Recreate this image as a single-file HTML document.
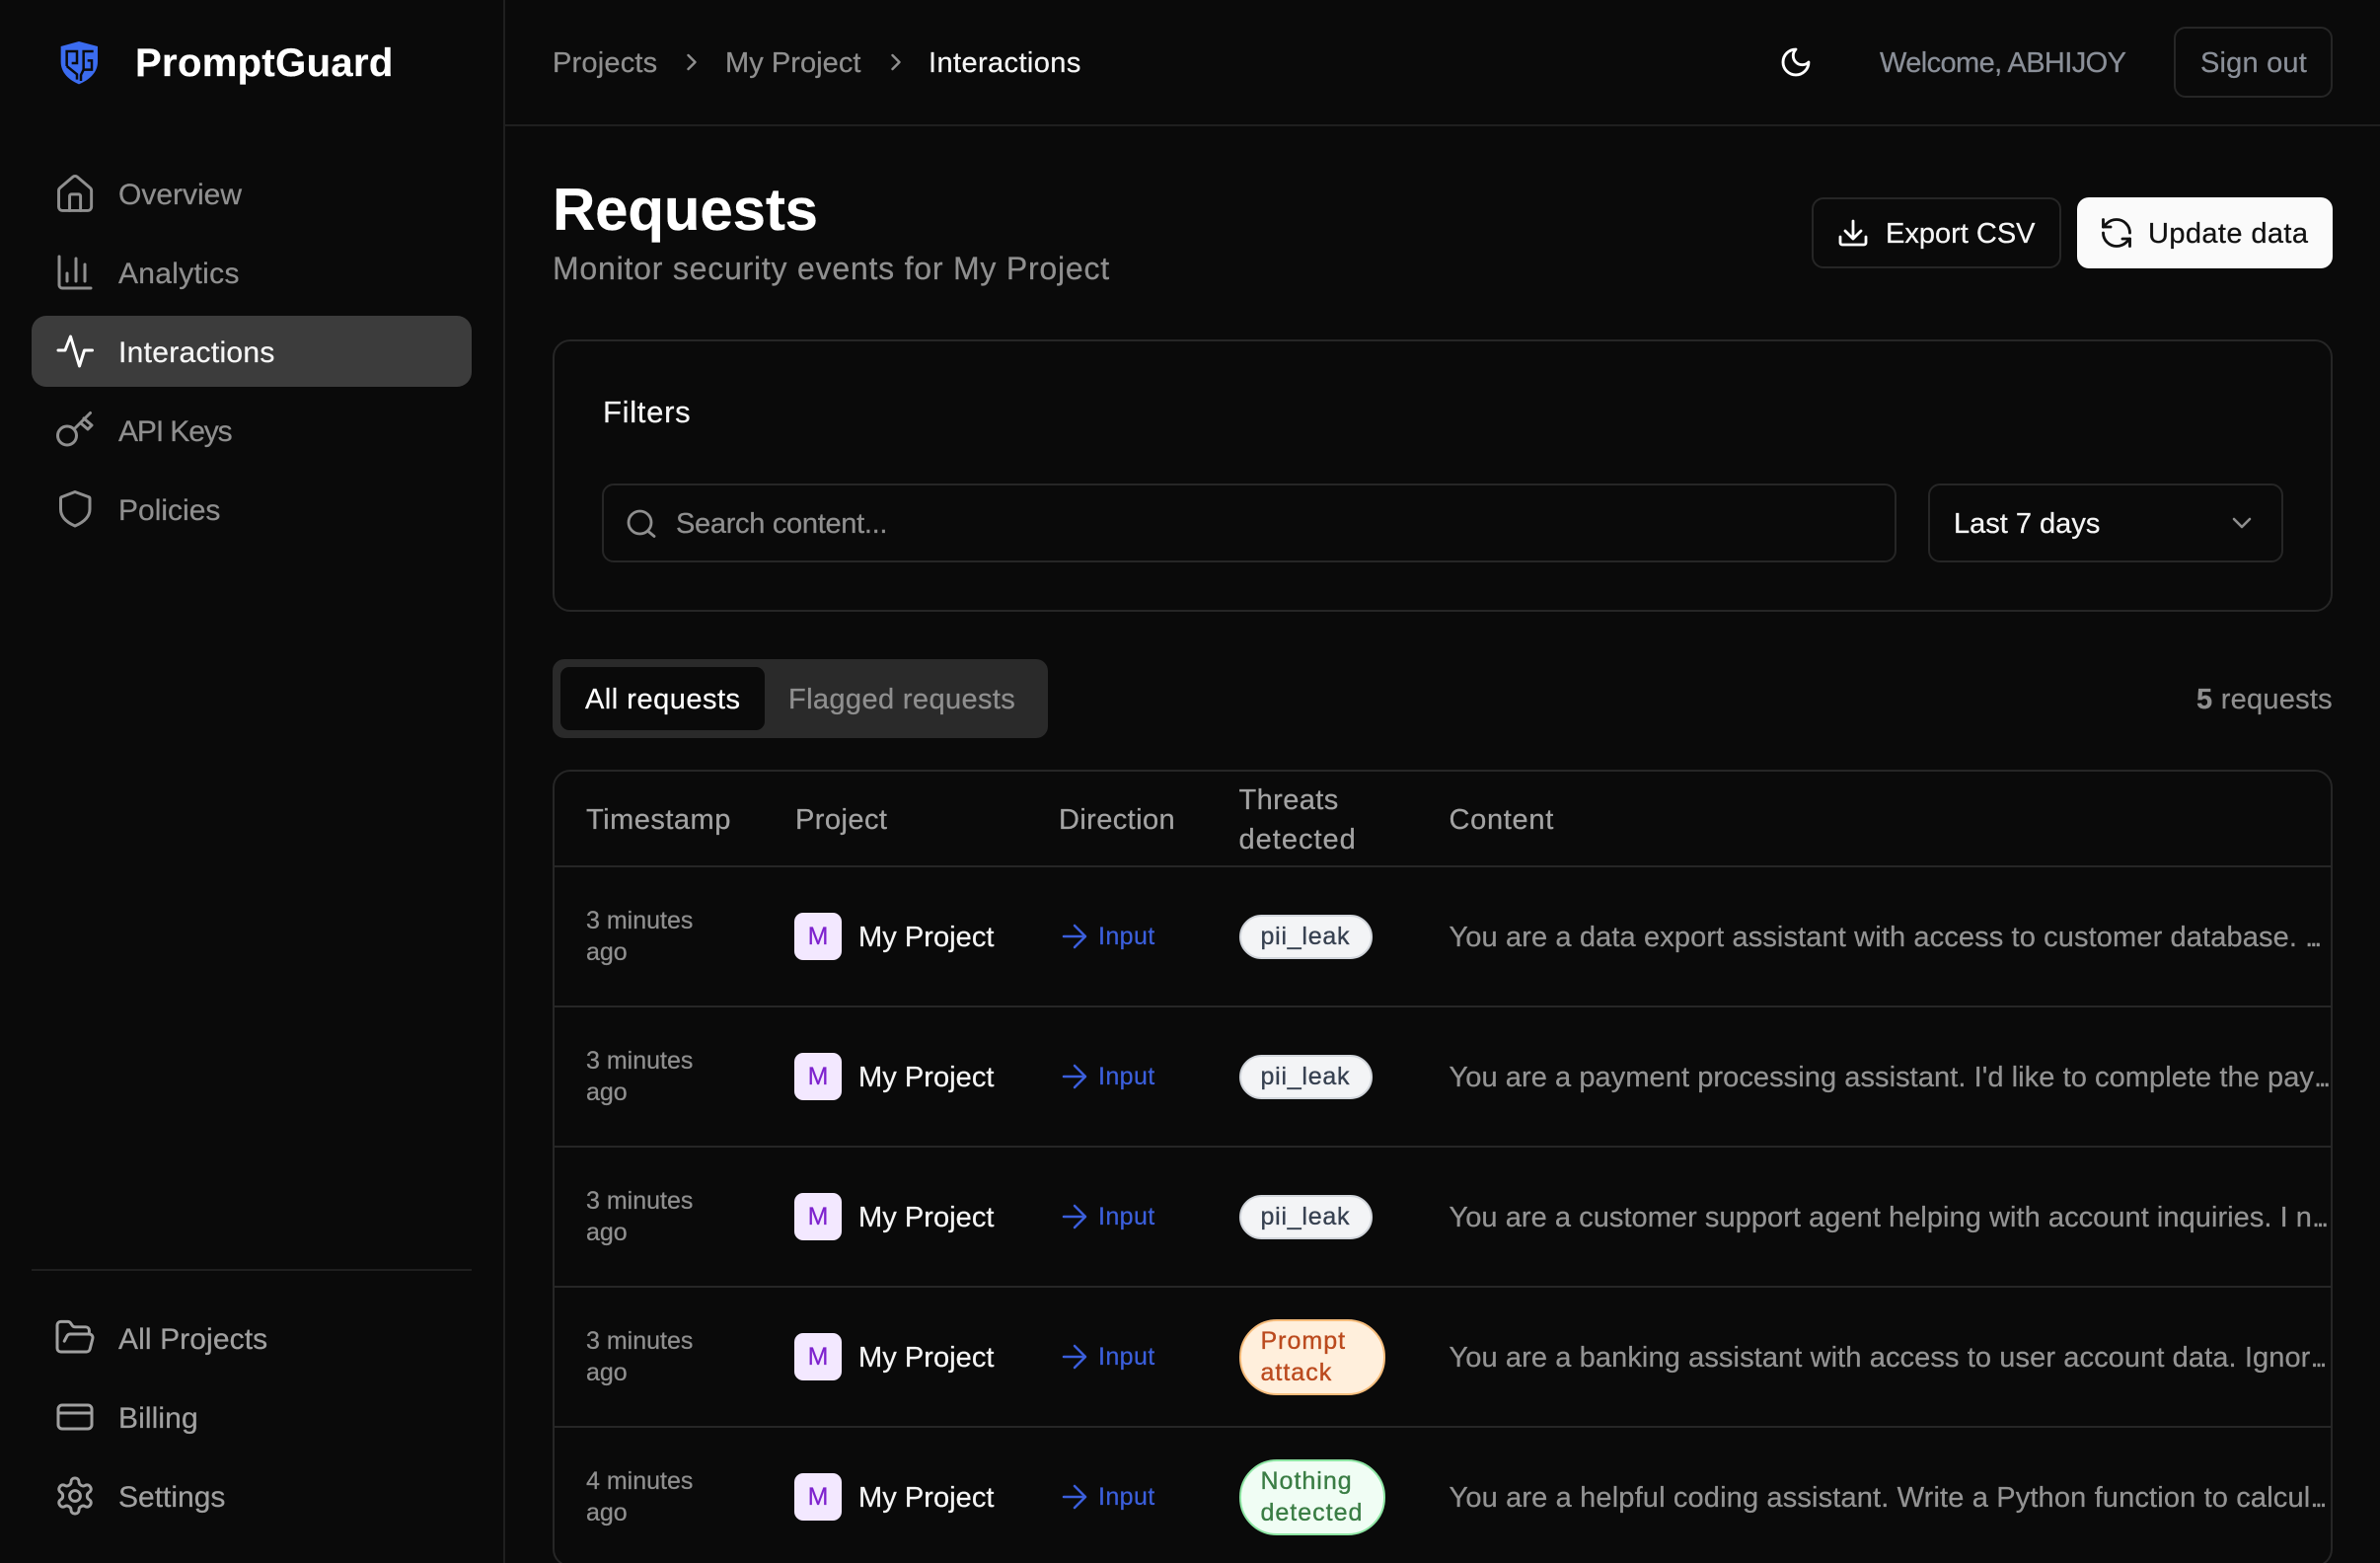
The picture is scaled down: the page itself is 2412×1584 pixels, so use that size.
<!DOCTYPE html>
<html lang="en">
<head>
<meta charset="utf-8">
<title>PromptGuard - Requests</title>
<style>
html,body{margin:0;padding:0;width:2412px;height:1584px;overflow:hidden;background:#0a0a0a}
body{position:relative;font-family:"Liberation Sans",Arial,sans-serif;font-size:29px;color:#8f8f8f;-webkit-text-stroke:.25px currentColor}
.t{position:absolute;white-space:nowrap;line-height:40px;height:40px;margin-top:1px}
.b{position:absolute;box-sizing:border-box;border:2px solid #262626}
.f{position:absolute}
.w{color:#f5f5f5}
.n{font-size:30px;margin-top:1.5px}
.h{color:#a3a3a3;margin-top:0}
.c{color:#939393;letter-spacing:.1px}
.c span{letter-spacing:-3.5px}
.ts{font-size:25px;line-height:32px;height:64px;color:#8f8f8f;position:absolute;white-space:normal;width:130px}
.av{position:absolute;left:805px;width:48px;height:48px;border-radius:9px;background:#f3e8ff;color:#7e22ce;font-size:25px;line-height:48px;text-align:center}
.inp{color:#3b5fdc;font-size:25px;letter-spacing:.4px;margin-top:0}
.pill{position:absolute;left:1255.500px;box-sizing:border-box;border:2px solid;font-size:25px;-webkit-text-stroke:.35px currentColor}
.pl{width:135px;height:45px;border-radius:23px;background:#f3f4f6;border-color:#d1d5db;color:#374151;line-height:41px;padding-left:20px;letter-spacing:.75px}
.p2{width:148px;height:77px;border-radius:38px;line-height:32px;padding:4px 0 0 20px;letter-spacing:1px}
svg.o{position:absolute;left:0;top:0}
</style>
</head>
<body>
<!-- frame lines -->
<div class="f" style="left:510px;top:0;width:2px;height:1584px;background:#1f1f1f"></div>
<div class="f" style="left:512px;top:126px;width:1900px;height:2px;background:#1f1f1f"></div>

<!-- sidebar -->
<div class="t" style="left:137px;top:43px;font-size:40px;font-weight:700;letter-spacing:.35px;color:#fff">PromptGuard</div>
<div class="f" style="left:32px;top:320px;width:446px;height:72px;border-radius:15px;background:#3c3c3c"></div>
<div class="t n" style="left:120px;top:176px">Overview</div>
<div class="t n" style="left:120px;top:256px;letter-spacing:.3px">Analytics</div>
<div class="t n w" style="left:120px;top:336px;letter-spacing:.3px">Interactions</div>
<div class="t n" style="left:120px;top:416px;letter-spacing:-1.100px">API Keys</div>
<div class="t n" style="left:120px;top:496px">Policies</div>
<div class="f" style="left:32px;top:1286px;width:446px;height:2px;background:#1f1f1f"></div>
<div class="t n" style="left:120px;top:1336px;letter-spacing:.1px;color:#a0a0a0">All Projects</div>
<div class="t n" style="left:120px;top:1416px;letter-spacing:.1px;color:#a0a0a0">Billing</div>
<div class="t n" style="left:120px;top:1496px;color:#a0a0a0">Settings</div>

<!-- top bar -->
<div class="t" style="left:560px;top:43px;letter-spacing:.2px">Projects</div>
<div class="t" style="left:735px;top:43px;letter-spacing:.05px">My Project</div>
<div class="t w" style="left:941px;top:43px;letter-spacing:.4px">Interactions</div>
<div class="t" style="left:1905px;top:43px;letter-spacing:-.6px;color:#8a8f98">Welcome, ABHIJOY</div>
<div class="b" style="left:2203px;top:27px;width:161px;height:72px;border-radius:12px"></div>
<div class="t" style="left:2230px;top:43px;letter-spacing:.2px;color:#8a8f98">Sign out</div>

<!-- title -->
<div class="t" style="left:560px;top:182px;font-size:60px;font-weight:700;letter-spacing:-.15px;color:#fff;line-height:60px;height:60px">Requests</div>
<div class="t" style="left:560px;top:252px;font-size:32px;letter-spacing:.78px;margin-top:0">Monitor security events for My Project</div>
<div class="b" style="left:1836px;top:200px;width:253px;height:72px;border-radius:12px"></div>
<div class="t w" style="left:1911px;top:216px">Export CSV</div>
<div class="f" style="left:2105px;top:200px;width:259px;height:72px;border-radius:12px;background:#fafafa"></div>
<div class="t" style="left:2177px;top:216px;letter-spacing:.4px;color:#111">Update data</div>

<!-- filters -->
<div class="b" style="left:560px;top:344px;width:1804px;height:276px;border-radius:18px"></div>
<div class="t w" style="left:611px;top:398px;font-size:31px;letter-spacing:.7px;margin-top:0">Filters</div>
<div class="b" style="left:610px;top:490px;width:1312px;height:80px;border-radius:12px"></div>
<div class="t" style="left:685px;top:510px;letter-spacing:-.3px">Search content...</div>
<div class="b" style="left:1954px;top:490px;width:360px;height:80px;border-radius:12px"></div>
<div class="t w" style="left:1980px;top:510px">Last 7 days</div>

<!-- tabs -->
<div class="f" style="left:560px;top:668px;width:502px;height:80px;border-radius:12px;background:#2a2a2a"></div>
<div class="f" style="left:568px;top:676px;width:207px;height:64px;border-radius:9px;background:#0a0a0a"></div>
<div class="t" style="left:593px;top:688px;letter-spacing:.5px;color:#fff">All requests</div>
<div class="t" style="left:799px;top:688px;letter-spacing:.38px">Flagged requests</div>
<div class="t" style="left:2226px;top:688px;letter-spacing:.25px"><b>5</b> requests</div>

<!-- table -->
<div class="b" style="left:560px;top:780px;width:1804px;height:808px;border-radius:18px"></div>
<div class="t h" style="left:594px;top:811px;letter-spacing:.5px">Timestamp</div>
<div class="t h" style="left:806px;top:811px;letter-spacing:.45px">Project</div>
<div class="t h" style="left:1073px;top:811px;letter-spacing:.4px">Direction</div>
<div class="t h" style="left:1255.500px;top:791px;letter-spacing:.4px">Threats</div>
<div class="t h" style="left:1255.500px;top:831px;letter-spacing:1px">detected</div>
<div class="t h" style="left:1468.500px;top:811px;letter-spacing:.7px">Content</div>
<div class="f" style="left:562px;top:877px;width:1800px;height:2px;background:#262626"></div>
<div class="f" style="left:562px;top:1019px;width:1800px;height:2px;background:#262626"></div>
<div class="f" style="left:562px;top:1161px;width:1800px;height:2px;background:#262626"></div>
<div class="f" style="left:562px;top:1303px;width:1800px;height:2px;background:#262626"></div>
<div class="f" style="left:562px;top:1445px;width:1800px;height:2px;background:#262626"></div>

<!-- row 1 -->
<div class="ts" style="left:594px;top:917px">3 minutes ago</div>
<div class="av" style="top:925px">M</div>
<div class="t w" style="left:870px;top:929px;letter-spacing:.05px">My Project</div>
<div class="t inp" style="left:1113px;top:929px">Input</div>
<div class="pill pl" style="top:927px">pii_leak</div>
<div class="t c" style="left:1468.500px;top:929px;letter-spacing:.12px">You are a data export assistant with access to customer database. <span>...</span></div>
<!-- row 2 -->
<div class="ts" style="left:594px;top:1059px">3 minutes ago</div>
<div class="av" style="top:1067px">M</div>
<div class="t w" style="left:870px;top:1071px;letter-spacing:.05px">My Project</div>
<div class="t inp" style="left:1113px;top:1071px">Input</div>
<div class="pill pl" style="top:1069px">pii_leak</div>
<div class="t c" style="left:1468.500px;top:1071px;letter-spacing:.07px">You are a payment processing assistant. I'd like to complete the pay<span>...</span></div>
<!-- row 3 -->
<div class="ts" style="left:594px;top:1201px">3 minutes ago</div>
<div class="av" style="top:1209px">M</div>
<div class="t w" style="left:870px;top:1213px;letter-spacing:.05px">My Project</div>
<div class="t inp" style="left:1113px;top:1213px">Input</div>
<div class="pill pl" style="top:1211px">pii_leak</div>
<div class="t c" style="left:1468.500px;top:1213px;letter-spacing:.05px">You are a customer support agent helping with account inquiries. I n<span>...</span></div>
<!-- row 4 -->
<div class="ts" style="left:594px;top:1343px">3 minutes ago</div>
<div class="av" style="top:1351px">M</div>
<div class="t w" style="left:870px;top:1355px;letter-spacing:.05px">My Project</div>
<div class="t inp" style="left:1113px;top:1355px">Input</div>
<div class="pill p2" style="top:1337px;background:#ffefdc;border-color:#f7bd7c;color:#bb4a1e">Prompt attack</div>
<div class="t c" style="left:1468.500px;top:1355px;letter-spacing:.1px">You are a banking assistant with access to user account data. Ignor<span>...</span></div>
<!-- row 5 -->
<div class="ts" style="left:594px;top:1485px">4 minutes ago</div>
<div class="av" style="top:1493px">M</div>
<div class="t w" style="left:870px;top:1497px;letter-spacing:.05px">My Project</div>
<div class="t inp" style="left:1113px;top:1497px">Input</div>
<div class="pill p2" style="top:1479px;background:#f0fdf4;border-color:#8ee6a4;color:#3a7d44">Nothing detected</div>
<div class="t c" style="left:1468.500px;top:1497px;letter-spacing:.15px">You are a helpful coding assistant. Write a Python function to calcul<span>...</span></div>

<!-- icons -->
<svg class="o" width="2412" height="1584" viewBox="0 0 2412 1584" fill="none" stroke-linecap="round" stroke-linejoin="round">
  <!-- logo -->
  <g transform="translate(50 32) scale(.3333)">
    <path d="M90 30 L147 45 V92 C147 125 120 148 90 160 C60 148 35 125 35 92 V45 Z" fill="#3b6cf0"/>
    <g stroke="#0a0a0a" stroke-width="7.500" stroke-linecap="butt" stroke-linejoin="miter">
      <path d="M53 105 V60 H84 V96 H68"/>
      <path d="M53 105 L84 130 V146"/>
      <path d="M134 60 H104 V116 H129 V88 H116"/>
      <path d="M104 116 L96 132 V150"/>
    </g>
  </g>
  <!-- sidebar icons -->
  <g stroke="#8f8f8f" stroke-width="3">
    <g transform="translate(54 174.800) scale(1.84)" stroke-width="1.6">
      <path d="M15 21v-8a1 1 0 0 0-1-1h-4a1 1 0 0 0-1 1v8"/>
      <path d="M3 10a2 2 0 0 1 .709-1.528l7-5.999a2 2 0 0 1 2.582 0l7 5.999A2 2 0 0 1 21 10v9a2 2 0 0 1-2 2H5a2 2 0 0 1-2-2z"/>
    </g>
    <path d="M60 260V289a3 3 0 0 0 3 3H92"/>
    <path d="M68 277V285M77 262V285M86 268V285"/>
    <circle cx="68" cy="441.500" r="9.500"/>
    <path d="M76.500 433.500L91.500 418.500M85 424l8 7-4 4-7-6"/>
    <path d="M76 498.500L89.500 503.500a2 2 0 0 1 1.500 2V516C91 525 83 530 76 533C69 530 61.500 525 61.500 516V505.500a2 2 0 0 1 1.500-2Z"/>
  </g>
  <path d="M59 355h7l5.500-14 9 30 5-16h8" stroke="#fff" stroke-width="3"/>
  <g stroke="#a0a0a0" stroke-width="3">
    <g transform="translate(54.400 1334) scale(1.8)" stroke-width="1.65">
      <path d="m6 14 1.500-2.900A2 2 0 0 1 9.240 10H20a2 2 0 0 1 1.940 2.500l-1.540 6a2 2 0 0 1-1.950 1.500H4a2 2 0 0 1-2-2V5a2 2 0 0 1 2-2h3.900a2 2 0 0 1 1.690.9l.81 1.200a2 2 0 0 0 1.670.9H18a2 2 0 0 1 2 2v2"/>
    </g>
    <rect x="59" y="1424" width="34" height="24" rx="4"/>
    <path d="M59 1432H93"/>
    <g transform="translate(54.400 1494.400) scale(1.8)" stroke-width="1.65">
      <path d="M12.220 2h-.44a2 2 0 0 0-2 2v.18a2 2 0 0 1-1 1.730l-.43.25a2 2 0 0 1-2 0l-.15-.08a2 2 0 0 0-2.730.73l-.22.38a2 2 0 0 0 .73 2.730l.15.1a2 2 0 0 1 1 1.720v.51a2 2 0 0 1-1 1.740l-.15.09a2 2 0 0 0-.73 2.730l.22.38a2 2 0 0 0 2.730.73l.15-.08a2 2 0 0 1 2 0l.43.25a2 2 0 0 1 1 1.730V20a2 2 0 0 0 2 2h.44a2 2 0 0 0 2-2v-.18a2 2 0 0 1 1-1.730l.43-.25a2 2 0 0 1 2 0l.15.08a2 2 0 0 0 2.730-.73l.22-.39a2 2 0 0 0-.73-2.730l-.15-.08a2 2 0 0 1-1-1.740v-.5a2 2 0 0 1 1-1.740l.15-.09a2 2 0 0 0 .73-2.730l-.22-.38a2 2 0 0 0-2.730-.73l-.15.08a2 2 0 0 1-2 0l-.43-.25a2 2 0 0 1-1-1.730V4a2 2 0 0 0-2-2z"/>
      <circle cx="12" cy="12" r="3"/>
    </g>
  </g>
  <!-- breadcrumb chevrons -->
  <path d="M697.500 56l7 7-7 7M904.500 56l7 7-7 7" stroke="#8f8f8f" stroke-width="2.400"/>
  <!-- moon -->
  <g transform="translate(1802.700 45.700) scale(1.44)" stroke="#fff" stroke-width="2">
    <path d="M12 3a6 6 0 0 0 9 9 9 9 0 1 1-9-9Z"/>
  </g>
  <!-- download -->
  <path d="M1878 224V241M1870 234l8 8 8-8M1865 240v6a2 2 0 0 0 2 2h22a2 2 0 0 0 2-2v-6" stroke="#fff" stroke-width="2.800"/>
  <!-- refresh -->
  <g transform="translate(2127 218) scale(1.5)" stroke="#111" stroke-width="1.900">
    <path d="M21 12a9 9 0 0 0-9-9 9.750 9.750 0 0 0-6.740 2.740L3 8"/>
    <path d="M3 3v5h5"/>
    <path d="M3 12a9 9 0 0 0 9 9 9.750 9.750 0 0 0 6.740-2.740L21 16"/>
    <path d="M16 16h5v5"/>
  </g>
  <!-- search -->
  <circle cx="648.500" cy="529.500" r="11.500" stroke="#8f8f8f" stroke-width="2.800"/>
  <path d="M657 538.500l6 5" stroke="#8f8f8f" stroke-width="2.800"/>
  <!-- select chevron -->
  <path d="M2264 526l8 8 8-8" stroke="#8f8f8f" stroke-width="2.600"/>
  <!-- input arrows -->
  <g stroke="#3b5fdc" stroke-width="2.500">
    <path d="M1078 949h21M1089 938l11 11-11 11"/>
    <path d="M1078 1091h21M1089 1080l11 11-11 11"/>
    <path d="M1078 1233h21M1089 1222l11 11-11 11"/>
    <path d="M1078 1375h21M1089 1364l11 11-11 11"/>
    <path d="M1078 1517h21M1089 1506l11 11-11 11"/>
  </g>
</svg>
</body>
</html>
